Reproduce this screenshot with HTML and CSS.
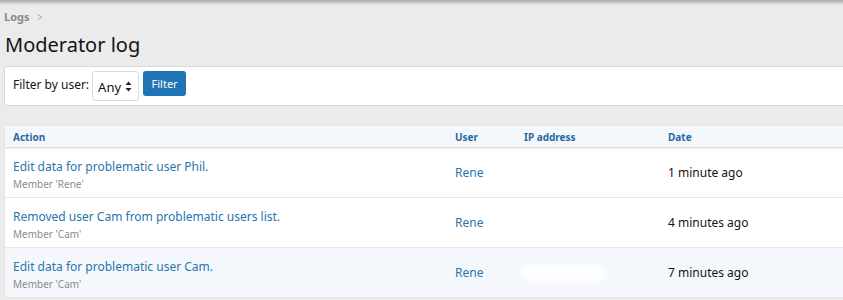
FILE: index.html
```html
<!DOCTYPE html>
<html>
<head>
<meta charset="utf-8">
<link rel="stylesheet" href="styles.css">
</head>
<body>
<div class="topshadow"></div>
<div class="page">
  <div class="crumbs"><span class="crumb">Logs</span><span class="chev">&gt;</span></div>
  <h1 class="title">Moderator log</h1>
  <div class="block filter">
    <span class="filter-label">Filter by user:</span>
    <div class="select"><span>Any</span>
      <svg class="arrows" width="7" height="11" viewBox="0 0 7 11"><path d="M3.5 0.5 L6.5 4 L0.5 4 Z M3.5 10.5 L6.5 7 L0.5 7 Z" fill="#222"/></svg>
    </div>
    <button class="btn">Filter</button>
  </div>
  <div class="block table">
    <div class="row head">
      <div class="cell">Action</div>
      <div class="cell">User</div>
      <div class="cell">IP address</div>
      <div class="cell">Date</div>
    </div>
    <div class="row">
      <div class="cell"><a class="link">Edit data for problematic user Phil.</a><div class="sub">Member 'Rene'</div></div>
      <div class="cell mid"><a class="link">Rene</a></div>
      <div class="cell mid"></div>
      <div class="cell mid date">1 minute ago</div>
    </div>
    <div class="row">
      <div class="cell"><a class="link">Removed user Cam from problematic users list.</a><div class="sub">Member 'Cam'</div></div>
      <div class="cell mid"><a class="link">Rene</a></div>
      <div class="cell mid"></div>
      <div class="cell mid date">4 minutes ago</div>
    </div>
    <div class="row hl">
      <div class="cell"><a class="link">Edit data for problematic user Cam.</a><div class="sub">Member 'Cam'</div></div>
      <div class="cell mid"><a class="link">Rene</a></div>
      <div class="cell mid"><span class="blur"></span></div>
      <div class="cell mid date">7 minutes ago</div>
    </div>
  </div>
</div>
</body>
</html>
```
FILE: styles.css
```css
html, body { margin: 0; padding: 0; overflow: hidden; }
body {
  background: #ebebeb;
  font-family: "Segoe UI", "Noto Sans", "Open Sans", sans-serif;
  color: #141414;
  width: 843px;
  height: 300px;
}
.topshadow {
  height: 5px;
  background: linear-gradient(#a9a9a9, #ebebeb);
}
.page { padding: 0 0 0 4px; margin-right: -20px; }
.crumbs { display: flex; align-items: center; gap: 8px; height: 23px; }
.crumb { font-weight: bold; font-size: 11px; color: #8a8a8a; }
.chev { font-size: 9px; color: #a0a0a0; transform: scaleY(1.2); }
.title { margin: 3px 0 7px 1px; font-weight: normal; font-size: 20px; line-height: 28px; color: #141414; }
.block {
  background: #fff;
  border: 1px solid #d8d8d8;
  border-radius: 3px;
}
.filter { display: flex; align-items: center; height: 38px; padding-left: 8px; }
.filter-label { font-size: 12px; margin-right: 3px; margin-top: -3px; }
.select {
  display: flex; align-items: center; justify-content: space-between;
  box-sizing: border-box;
  width: 47px; height: 30px;
  border: 1px solid #dcdcdc; border-radius: 3px;
  padding: 0 6px 0 5px;
  font-size: 13px;
  margin-right: 4px;
}
.select span { margin-top: 2px; }
.btn {
  border: 0; border-radius: 3px;
  background: #1f74b4;
  color: #fff;
  font-family: inherit;
  font-size: 11px;
  height: 25px; width: 43px;
  padding: 0;
  margin-top: -5px;
}
.table { margin-top: 19px; border-color: #e3e3e3; }
.row {
  display: grid;
  grid-template-columns: 442px 69px 144px 1fr;
  border-top: 1px solid #e7e7e7;
  height: 49px;
}
.row.head {
  border-top: 0;
  height: 21px;
  background: #f4f8fc;
  border-bottom: 1px solid #d7dfe7;
  box-shadow: 0 1px 1px #eef1f4;
}
.row.head + .row { border-top: 0; }
.row.head .cell { font-size: 10px; font-weight: bold; color: #2669a0; align-self: center; }
.cell { padding-left: 8px; font-size: 12px; }
.row:not(.head) > .cell:first-child { padding-top: 10px; }
.mid { align-self: center; }
.row.hl { background: #f4f8fc; }
.link { color: #2a75ad; text-decoration: none; }
.sub { font-size: 10px; color: #8c8c8c; margin-top: 2px; }
.date { color: #141414; }
.blur {
  display: block;
  width: 84px; height: 16px;
  margin-left: -3px;
  background: #fff;
  border-radius: 8px;
  filter: blur(3px);
}
```
